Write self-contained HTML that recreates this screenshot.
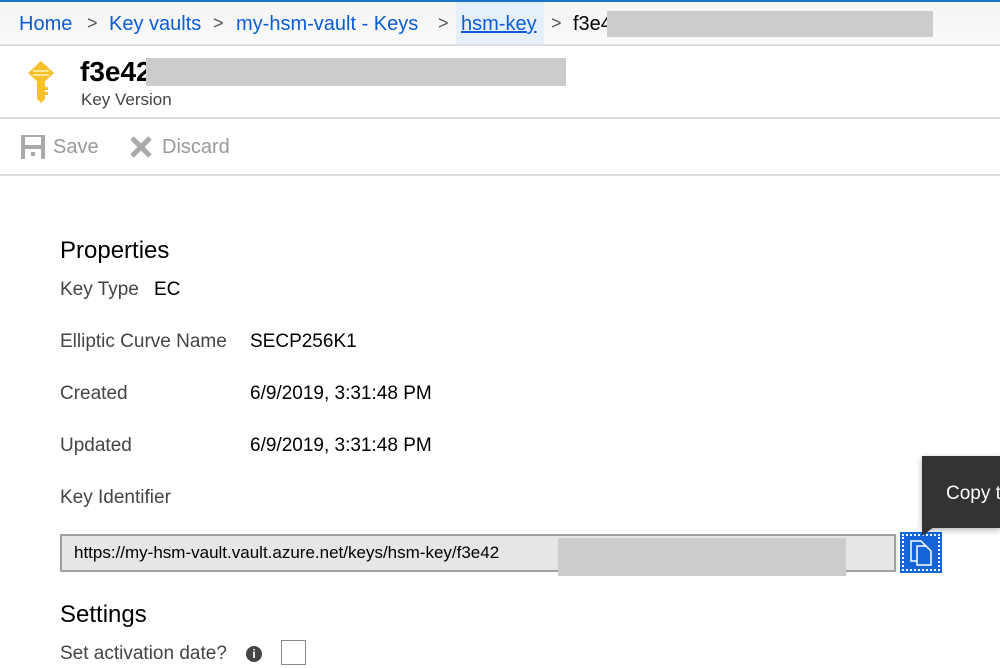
<!DOCTYPE html>
<html><head><style>
*{margin:0;padding:0;box-sizing:border-box}
body{width:1000px;height:668px;overflow:hidden;background:#fff;font-family:"Liberation Sans",sans-serif;position:relative;color:#000}
.a{position:absolute;white-space:nowrap}
.bc{font-size:20px;color:#0b5cd6}
.g{color:#555}
.lbl{font-size:19px;color:#444}
.val{font-size:19px;color:#000}
</style></head><body>
<div class="a" style="left:0;top:0;width:1000px;height:2px;background:#1a73c8"></div>
<div class="a" style="left:0;top:2px;width:1000px;height:42px;background:linear-gradient(#f4f4f4,#fafafa)"></div>
<div class="a" style="left:456px;top:2px;width:88px;height:42px;background:#e6f0fb"></div>
<div class="a" style="left:0;top:44px;width:1000px;height:2px;background:#ddd"></div>
<div class="a bc" style="left:19px;top:13px">Home</div>
<div class="a g" style="left:87px;top:13px;font-size:18px">&gt;</div>
<div class="a bc" style="left:109px;top:13px">Key vaults</div>
<div class="a g" style="left:213px;top:13px;font-size:18px">&gt;</div>
<div class="a bc" style="left:236px;top:13px">my-hsm-vault - Keys</div>
<div class="a g" style="left:438px;top:13px;font-size:18px">&gt;</div>
<div class="a bc" style="left:461px;top:13px;text-decoration:underline">hsm-key</div>
<div class="a g" style="left:551px;top:13px;font-size:18px">&gt;</div>
<div class="a" style="left:573px;top:13px;font-size:20px">f3e4</div>
<div class="a" style="left:607px;top:11px;width:326px;height:26px;background:#ccc"></div>
<svg class="a" style="left:27px;top:60px" width="28" height="46" viewBox="0 0 28 46"><path d="M14 1 L27 13 L14 25 L1 13Z" fill="#f6c12b"/><rect x="6" y="10" width="16" height="2" fill="#fde79a"/><rect x="6" y="14" width="16" height="2" fill="#fde79a"/><path d="M10 22 h8 v5 h3 v3 h-3 v2 h3 v3 h-3 v4 l-4 4 l-4 -4Z" fill="#f6c12b"/></svg>
<div class="a" style="left:80px;top:56px;font-size:28px;font-weight:bold">f3e42</div>
<div class="a" style="left:146px;top:58px;width:420px;height:28px;background:#ccc"></div>
<div class="a" style="left:81px;top:90px;font-size:17px;color:#444">Key Version</div>
<div class="a" style="left:0;top:117px;width:1000px;height:2px;background:#ddd"></div>
<svg class="a" style="left:20px;top:134px" width="26" height="26" viewBox="0 0 26 26"><path d="M1 1h24v24H1z" fill="#aaa"/><rect x="5" y="3" width="16" height="8" fill="#fff"/><rect x="5" y="15" width="16" height="10" fill="#fff"/><rect x="11" y="18" width="4" height="4" fill="#aaa"/></svg>
<div class="a" style="left:53px;top:136px;font-size:20px;color:#999">Save</div>
<svg class="a" style="left:129px;top:135px" width="24" height="24" viewBox="0 0 24 24"><path d="M3 3L21 21M21 3L3 21" stroke="#aaa" stroke-width="5"/></svg>
<div class="a" style="left:162px;top:136px;font-size:20px;color:#999">Discard</div>
<div class="a" style="left:0;top:174px;width:1000px;height:2px;background:#ddd"></div>
<div class="a" style="left:60px;top:237px;font-size:24px">Properties</div>
<div class="a lbl" style="left:60px;top:279px">Key Type</div><div class="a val" style="left:154px;top:279px">EC</div>
<div class="a lbl" style="left:60px;top:331px">Elliptic Curve Name</div><div class="a val" style="left:250px;top:331px">SECP256K1</div>
<div class="a lbl" style="left:60px;top:383px">Created</div><div class="a val" style="left:250px;top:383px">6/9/2019, 3:31:48 PM</div>
<div class="a lbl" style="left:60px;top:435px">Updated</div><div class="a val" style="left:250px;top:435px">6/9/2019, 3:31:48 PM</div>
<div class="a lbl" style="left:60px;top:487px">Key Identifier</div>
<div class="a" style="left:60px;top:534px;width:836px;height:38px;background:#e6e6e6;border:2px solid #a0a0a0"></div>
<div class="a" style="left:74px;top:543px;font-size:17px">https://my-hsm-vault.vault.azure.net/keys/hsm-key/f3e42</div>
<div class="a" style="left:558px;top:538px;width:288px;height:38px;background:#ccc"></div>
<div class="a" style="left:902px;top:534px;width:38px;height:37px;background:#1565d8;border:2px dotted #fff;outline:2px solid #1565d8"></div>
<svg class="a" style="left:908px;top:538px" width="26" height="28" viewBox="0 0 26 28"><path d="M3 3h10l4 4v16H3z" fill="none" stroke="#fff" stroke-width="1.5"/><path d="M9 8h9l5 5v14H9z" fill="#1565d8" stroke="#fff" stroke-width="1.5"/></svg>
<div class="a" style="left:922px;top:456px;width:78px;height:72px;background:#333;box-shadow:0 2px 6px rgba(0,0,0,.3)"></div>
<div class="a" style="left:922px;top:527px;width:0;height:0;border-top:9px solid #333;border-right:12px solid transparent"></div>
<div class="a" style="left:946px;top:483px;font-size:19px;color:#fff">Copy t</div>
<div class="a" style="left:60px;top:601px;font-size:24px">Settings</div>
<div class="a lbl" style="left:60px;top:643px">Set activation date?</div>
<div class="a" style="left:246px;top:646px;width:16px;height:16px;border-radius:50%;background:#444;color:#fff;font-size:12px;font-weight:bold;text-align:center;line-height:16px">i</div>
<div class="a" style="left:281px;top:640px;width:25px;height:25px;border:1.5px solid #888;background:#fff"></div>
</body></html>
